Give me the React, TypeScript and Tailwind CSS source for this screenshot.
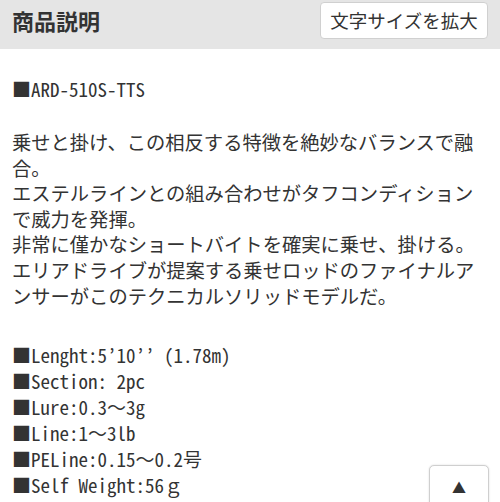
import React from "react";

const jp = "font-['Noto_Sans_CJK_JP',sans-serif]";
const mono = "font-['Noto_Sans_CJK_JP',sans-serif] [font-feature-settings:'hwid']";
const fw = "[font-feature-settings:'fwid']";

function F({ children }: { children: React.ReactNode }) {
  return <span className={fw}>{children}</span>;
}

function Q() {
  return <span className="inline-block w-[9.5px] text-center">’</span>;
}

function S() {
  return <span className="inline-block w-[9.5px]">&nbsp;</span>;
}

export default function App() {
  const specs: React.ReactNode[] = [
    <>Lenght:5<Q />10<Q /><Q /><S />(1.78m)</>,
    <>Section:<S />2pc</>,
    <>Lure:0.3<F>～</F>3g</>,
    <>Line:1<F>～</F>3lb</>,
    <>PELine:0.15<F>～</F>0.2<F>号</F></>,
    <>Self<S />Weight:56<F>ｇ</F></>,
  ];
  return (
    <div className={`relative w-[500px] h-[502px] overflow-hidden bg-white text-[#333] ${jp}`}>
      <div className="h-[49px] bg-[#e5e5e5] flex items-center justify-between pl-3 pr-3">
        <h2 className="text-[22px] font-bold text-[#333] leading-none -mt-[9px]">商品説明</h2>
        <button className="w-[168px] h-[37px] -mt-[8px] bg-white border border-[#d0d0d0] rounded-[4px] text-[18.5px] text-[#333] leading-none flex items-center justify-center">
          文字サイズを拡大
        </button>
      </div>
      <div className="px-3 pt-[27px]">
        <div className={`${mono} text-[19px] leading-[26px]`}>
          <F>■</F>ARD-510S-TTS
        </div>
        <div className="mt-[28px] text-[19.3px] leading-[25.6px]">
          乗せと掛け、この相反する特徴を絶妙なバランスで融合。
          <br />
          エステルラインとの組み合わせがタフコンディションで威力を発揮。
          <br />
          非常に僅かなショートバイトを確実に乗せ、掛ける。
          <br />
          エリアドライブが提案する乗せロッドのファイナルアンサーがこのテクニカルソリッドモデルだ。
        </div>
        <div className={`${mono} mt-[33px] text-[19px] leading-[26px] whitespace-pre`}>
          {specs.map((s, i) => (
            <div key={i}>
              <F>■</F>
              {s}
            </div>
          ))}
        </div>
      </div>
      <button className="absolute left-[429px] top-[465px] w-[60px] h-[50px] bg-white border border-[#cfcfcf] rounded-[5px] shadow-[0_0_2px_rgba(0,0,0,0.15)] flex items-start justify-center pt-[14px]">
        <span className="text-[14px] leading-none text-[#333]">▲</span>
      </button>
    </div>
  );
}
